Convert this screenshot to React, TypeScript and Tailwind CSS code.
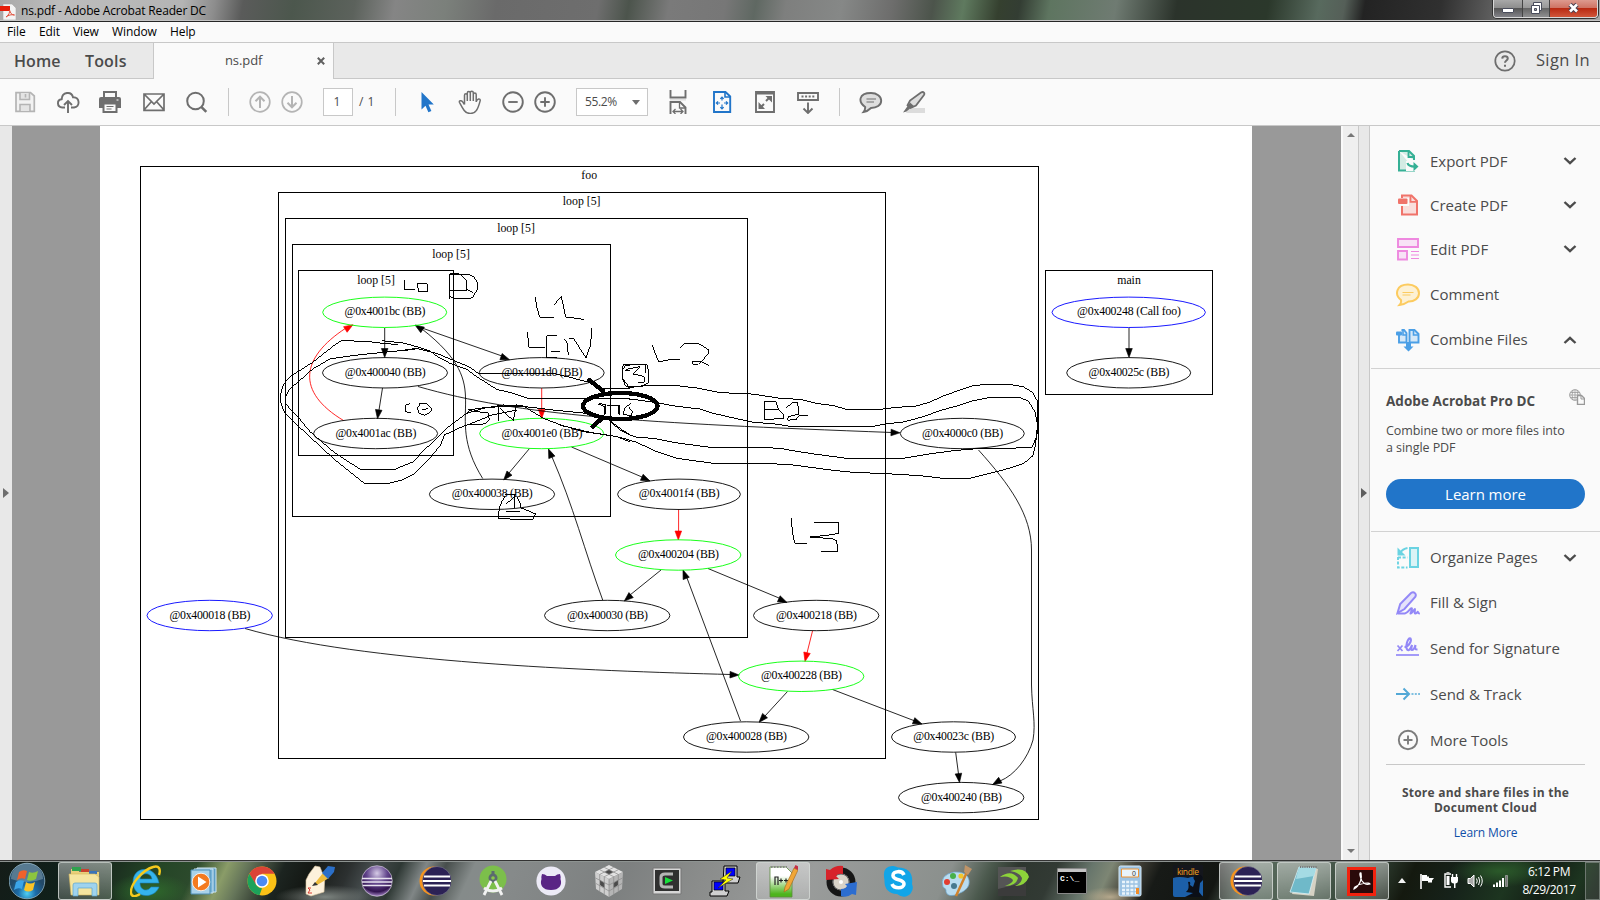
import type { ReactNode } from "react";

/* ---------- shared helpers ---------- */

function Ico({ children, size = 24, vb = 24, className = "" }: { children: ReactNode; size?: number; vb?: number; className?: string }) {
  return (
    <svg width={size} height={size} viewBox={`0 0 ${vb} ${vb}`} fill="none" className={`block shrink-0 ${className}`}>
      {children}
    </svg>
  );
}

/* ---------- title bar ---------- */

function TitleBar() {
  return (
    <header className="relative flex h-[22px] items-start justify-between overflow-hidden border-b border-[#262626] bg-[linear-gradient(100deg,#a9a9a9_0px,#bdbdbd_60px,#b4b4b4_180px,#8d8d8d_212px,#5a5b5a_240px,#4c574d_290px,#5c625c_350px,#858585_390px,#7b807b_440px,#6a6a6a_490px,#6e6e6e_590px,#4c544c_620px,#7a7a7a_660px,#777_715px,#5f6862_745px,#7e7f7e_775px,#868887_830px,#6d6d6c_880px,#4c544b_920px,#5f7a5f_950px,#35402f_985px,#333d33_1005px,#5e7560_1035px,#6f7b72_1100px,#2b332b_1160px,#2b382b_1250px,#586a5e_1300px,#555f58_1325px,#232323_1345px,#303030_1420px,#5c5c5c_1470px,#999_1500px,#aaa_1600px)]">
      <div className="absolute inset-x-0 bottom-0 h-px bg-[#c4c4c4]" />
      <div className="flex items-center">
        <svg width="17" height="20" viewBox="0 0 17 20" className="block">
          <path d="M3 3h9l4 4v12H3z" fill="#f4f4f4" stroke="#aaa" strokeWidth=".6" />
          <path d="M0 5h10v5H0z" fill="#e61e0a" />
          <path d="M6 16c3-2 4-5 3.500-7 1 3 2 5 5 5-3-.8-6 0-8.500 2z" stroke="#e0523f" fill="none" />
        </svg>
        <span className="ml-[4px] text-[12px] leading-[21px] tracking-[-0.17px] text-black">ns.pdf - Adobe Acrobat Reader DC</span>
      </div>
      <div className="mr-[2px] flex h-[18px] overflow-hidden rounded-b-[4px] border border-t-0 border-[#d8d8d8] ring-1 ring-[#333]">
        <div className="flex w-[29px] justify-center border-r border-[#444] bg-[linear-gradient(#a8a8a8_0,#8e8e8e_45%,#565656_50%,#828288_100%)] pt-[8px]">
          <div className="h-[5px] w-[12px] rounded-[1px] border border-[#4a4d5c] bg-white" />
        </div>
        <div className="flex w-[27px] justify-center border-r border-[#444] bg-[linear-gradient(#b0b0b0_0,#999_45%,#666_50%,#8e8e90_100%)] pt-[1px]">
          <svg width="13" height="14" viewBox="0 0 13 14">
            <path d="M3.500 1.500h8v8h-8z" fill="#fff" stroke="#4a4d5c" />
            <path d="M1.500 4.500h8v8h-8z" fill="#fff" stroke="#4a4d5c" />
            <path d="M4.500 7.500h2v2h-2z" fill="#aaa" stroke="#4a4d5c" />
          </svg>
        </div>
        <div className="flex w-[47px] justify-center bg-[linear-gradient(#dd9a8e_0,#cf7464_45%,#b92a12_50%,#d0563a_100%)] pt-[2px]">
          <svg width="13" height="12" viewBox="0 0 13 12">
            <path d="M3 2.500l7 7M10 2.500l-7 7" stroke="#4a4050" strokeWidth="4.600" />
            <path d="M3 2.500l7 7M10 2.500l-7 7" stroke="#fff" strokeWidth="2.600" />
          </svg>
        </div>
      </div>
    </header>
  );
}

function MenuBar() {
  return (
    <nav className="flex h-[20px] items-center bg-[#fafafa] pl-[7px] text-[12px] tracking-[-0.1px] text-black">
      <span className="w-[32px]">File</span>
      <span className="w-[34px]">Edit</span>
      <span className="w-[39px]">View</span>
      <span className="w-[58px]">Window</span>
      <span>Help</span>
    </nav>
  );
}

function TabBar() {
  return (
    <div className="flex h-[37px] border-y border-[#c8c8c8] bg-[#e9e9e9] text-[#4b4b4b]">
      <div className="flex w-[154px] items-center border-r border-[#c8c8c8] pl-[14px] text-[16px] font-semibold">
        <span className="w-[71px] tracking-[0.1px]">Home</span>
        <span className="tracking-[0.15px]">Tools</span>
      </div>
      <div className="-mb-px flex w-[180px] items-center border-r border-[#c8c8c8] bg-[#fafafa] pl-[71px]">
        <span className="w-[92px] text-[13px] tracking-[-0.1px]">ns.pdf</span>
        <svg width="8" height="8" viewBox="0 0 8 8"><path d="M.8.8l6.400 6.400M7.200.8L.8 7.200" stroke="#606060" strokeWidth="2" /></svg>
      </div>
      <div className="ml-auto flex items-center pr-[10px]">
        <Ico size={22}>
          <circle cx="12" cy="12" r="10.600" stroke="#6e6e6e" strokeWidth="1.900" />
          <path d="M9 9.400c.2-3.400 6-3.200 6 0 0 2-3 2.200-3 4.400M12 16v2.200" stroke="#6e6e6e" strokeWidth="2.200" />
        </Ico>
        <span className="ml-[20px] text-[16.500px] font-medium tracking-[0.4px]">Sign In</span>
      </div>
    </div>
  );
}

/* ---------- toolbar ---------- */

const G = "#6e6e6e";
const L = "#b4b4b4";

function Sep({ className }: { className: string }) {
  return <div className={`h-[28px] w-px shrink-0 bg-[#c8c8c8] ${className}`} />;
}

function Toolbar() {
  return (
    <div className="flex h-[47px] items-center border-b border-[#c8c8c8] bg-[#fafafa] text-[12px] text-[#4b4b4b]">
      <Ico className="ml-[13px]">
        <path d="M3 2.700h14.500L21.300 6v15.300H3z" fill="#f2f2f2" stroke={L} strokeWidth="1.700" />
        <path d="M7 3v6.500h9.500V3M12.500 4v3.500M7 21v-6.500h10V21" stroke={L} strokeWidth="1.600" fill="#e4e4e4" />
      </Ico>
      <Ico className="ml-[19px]">
        <path d="M9 17.500H6.300c-5.600-.5-5.800-7.700-.6-8.300C6 1.800 15.500.8 17 7.200c7-.5 7.500 9.800 1 10.300h-3" stroke={G} strokeWidth="1.900" />
        <path d="M12 23V11.500M8 15l4-4 4 4" stroke={G} strokeWidth="1.900" />
      </Ico>
      <Ico className="ml-[18px]">
        <path d="M6 8V2h12v6" stroke={G} strokeWidth="2" />
        <path d="M1 9a2 2 0 012-2h18a2 2 0 012 2v9H1z" fill={G} />
        <path d="M5.500 13.500h13v8.500h-13z" fill="#fafafa" stroke={G} strokeWidth="2" />
        <path d="M8.500 16.500h7M8.500 19h5" stroke={G} strokeWidth="1.200" /><path d="M18.500 10h2" stroke="#fff" />
      </Ico>
      <Ico className="ml-[20px]">
        <path d="M2 4h20v16.300H2zM2 4l10 10L22 4M2 20l7.500-8.500M22 20l-7.500-8.500" stroke={G} strokeWidth="1.700" />
      </Ico>
      <Ico className="ml-[19px]">
        <circle cx="10.500" cy="11" r="8.300" stroke={G} strokeWidth="2" /><path d="M16.300 16.800l5 5" stroke={G} strokeWidth="2.600" />
      </Ico>
      <Sep className="ml-[19px]" />
      <Ico className="ml-[19px]">
        <circle cx="12" cy="12" r="9.800" stroke={L} strokeWidth="1.700" /><path d="M12 18V7M7.500 11.300L12 6.700l4.500 4.600" stroke={L} strokeWidth="2" />
      </Ico>
      <Ico className="ml-[8px]">
        <circle cx="12" cy="12" r="9.800" stroke={L} strokeWidth="1.700" /><path d="M12 6v11M7.500 12.700l4.500 4.600 4.500-4.600" stroke={L} strokeWidth="2" />
      </Ico>
      <div className="ml-[19px] flex h-[28px] w-[30px] shrink-0 items-center justify-center border border-[#c8c8c8] bg-white pr-[2px]">1</div>
      <span className="ml-[6px] w-[17px] shrink-0 tracking-[0.5px] whitespace-nowrap">/ 1</span>
      <Sep className="ml-[19px]" />
      <Ico className="ml-[19px]">
        <path d="M6.500 2v17.500l4-3.800 2.900 6.500 3-1.300-2.900-6.400h5.300z" fill="#2175c9" />
      </Ico>
      <Ico className="ml-[19px]">
        <path d="M6.500 14.500V5.300c0-2 2.800-2 2.800 0V11M9.300 11V3c0-2 3-2 3 0v8M12.300 11V2.800c0-2 3-2 3 0V11M15.300 11V4.500c0-1.900 2.900-1.900 2.900 0V12c.6-3.600 4.400-4 4-1.400-.7 2.600-1.800 7-3.700 9.700-2.600 4-9.300 4.300-12.300.2-2-2.700-3.400-5.600-4.700-8-.8-2.200 2-2.400 3-.8l2 2.800" stroke={G} strokeWidth="1.500" />
      </Ico>
      <Ico className="ml-[19px]">
        <circle cx="12" cy="12" r="9.800" stroke={G} strokeWidth="1.900" /><path d="M7.300 12h9.400" stroke={G} strokeWidth="1.900" />
      </Ico>
      <Ico className="ml-[8px]">
        <circle cx="12" cy="12" r="9.800" stroke={G} strokeWidth="1.900" /><path d="M7.300 12h9.400M12 7.300v9.400" stroke={G} strokeWidth="1.900" />
      </Ico>
      <div className="ml-[19px] flex h-[28px] w-[72px] shrink-0 items-center justify-between border border-[#c8c8c8] bg-white pr-[7px] pl-[8px]">
        <span className="tracking-[-0.4px]">55.2%</span>
        <div className="h-0 w-0 border-x-4 border-t-[5px] border-x-transparent border-t-[#6e6e6e]" />
      </div>
      <Ico className="ml-[18px]">
        <path d="M4.500 0v7.500h15V0M4.500 24V12h9.500l5.500 5.500V24" stroke={G} strokeWidth="1.900" />
        <path d="M13.500 12v6h6M7.500 21.500h9M9.500 19l-2.500 2.500 2.500 2.500M14.500 19l2.500 2.500-2.500 2.500" stroke={G} strokeWidth="1.300" />
        <path d="M4 9.800h16" stroke="#ddd" strokeWidth="1.400" />
      </Ico>
      <Ico className="ml-[20px]">
        <path d="M4 2h11.500L20.200 6.500V22H4z" stroke="#2175c9" strokeWidth="1.900" />
        <path d="M15 2v5h5" stroke="#2175c9" strokeWidth="1.600" />
        <path d="M12 7v3.500M12 14.500V19M6.500 13H10M14 13h3.800M10.300 8.800L12 7l1.700 1.800M10.300 17.200L12 19l1.700-1.800M8 11.300L6.300 13 8 14.700M16 11.300l1.700 1.700-1.700 1.700" stroke="#2175c9" strokeWidth="1.200" />
      </Ico>
      <Ico className="ml-[19px]">
        <path d="M3 2h18v20H3z" stroke={G} strokeWidth="1.900" /><path d="M3 3.500h18" stroke={G} strokeWidth="2" />
        <path d="M12.500 6H19v6.500zM5.500 12v7H12z" fill={G} /><path d="M13 11l4-4M7 18l4-4" stroke={G} strokeWidth="2" />
      </Ico>
      <Ico className="ml-[19px]">
        <path d="M2 3h20v7H2z" stroke={G} strokeWidth="1.900" /><path d="M5.500 6.500h13" stroke={G} strokeWidth="2" strokeDasharray="2 1.600" />
        <path d="M12 12.500V23M7.500 18.500L12 23l4.500-4.500" stroke={G} strokeWidth="1.900" />
      </Ico>
      <Sep className="ml-[19px]" />
      <Ico className="ml-[19px]">
        <path d="M12 3c5.800 0 10.200 3.200 10.200 7.700S17.800 18 12 18c-1.800 1.800-4 3.400-7.500 4 1.300-1.700 1.800-3.300 1.700-5C-1 12-.6 3 12 3z" fill="#dedede" stroke={G} strokeWidth="1.900" />
        <path d="M7.500 9h9.500M7.500 12h7.500" stroke={G} strokeWidth="1.200" />
      </Ico>
      <Ico className="ml-[19px]">
        <path d="M7 18h16v5H4z" fill="#dcdcdc" />
        <path d="M19 2.500c2.600-1.500 4.200.7 2.800 2.800L14 15.500 8.500 18l-3-2.700L8 10.500z" fill="#dedede" stroke={G} strokeWidth="1.800" />
        <path d="M8 12.500l4.500 4-4.500 2L4.500 21.500 1 22.500l5-7z" fill={G} />
      </Ico>
    </div>
  );
}

/* ---------- document: control-flow graph ---------- */

type GraphNode = [string, number, number, number, string];
const NODES: GraphNode[] = [
  ["@0x4001bc (BB)", 384.7, 312.3, 62, "#0f0"],
  ["@0x400040 (BB)", 385, 372.8, 62.5, "#000"],
  ["@0x4001ac (BB)", 375.6, 433.5, 62, "#000"],
  ["@0x4001d0 (BB)", 541.7, 372.8, 62.5, "#000"],
  ["@0x4001e0 (BB)", 541.7, 433.5, 62, "#0f0"],
  ["@0x400038 (BB)", 492, 494.3, 62.6, "#000"],
  ["@0x4001f4 (BB)", 679, 494.3, 61.4, "#000"],
  ["@0x400204 (BB)", 678.2, 555, 62.7, "#0f0"],
  ["@0x4000c0 (BB)", 962.3, 433.5, 62, "#000"],
  ["@0x400030 (BB)", 607.2, 615.5, 62.7, "#000"],
  ["@0x400018 (BB)", 209.7, 615.5, 62.7, "#00f"],
  ["@0x400218 (BB)", 816.2, 615.5, 62.7, "#000"],
  ["@0x400228 (BB)", 801.2, 676.3, 62.7, "#0f0"],
  ["@0x400028 (BB)", 746.2, 737, 62.7, "#000"],
  ["@0x40023c (BB)", 953.5, 737, 62, "#000"],
  ["@0x400240 (BB)", 961.2, 797.6, 62.7, "#000"],
  ["@0x400248 (Call foo)", 1128.7, 312.3, 76.700, "#00f"],
  ["@0x40025c (BB)", 1128.7, 372.8, 62, "#000"],
];

/* [label, left, top, right, bottom, label centre, label baseline] */
const CLUSTERS: [string, number, number, number, number, number, number][] = [
  ["foo", 140.5, 166.5, 1038.5, 819.5, 589.2, 179],
  ["loop [5]", 278.5, 192.5, 885.5, 758.5, 581.700, 205],
  ["loop [5]", 285.5, 218.5, 747.5, 637.5, 516, 232],
  ["loop [5]", 292.5, 244.5, 610.5, 516.5, 451, 258],
  ["loop [5]", 298.5, 270.5, 453.5, 455.5, 376, 284],
  ["main", 1045.5, 270.5, 1212.5, 394.5, 1129, 284],
];

/* [path, tip x, tip y, heading in degrees, colour] */
const EDGES: [string, number, number, number, string][] = [
  ["M384.700 328V350", 384.7, 357.5, 90, "#000"],
  ["M382.500 388L379 410", 377.5, 418.8, 98, "#000"],
  ["M343.500 420.500C296 392 300 358 346 328", 353, 324.700, -32, "#f00"],
  ["M422 328L502 356", 509.5, 359.7, 20, "#000"],
  ["M482.700 478.500C440 410 500 390 422 329", 415, 325, 213, "#000"],
  ["M541.700 388V410", 541.7, 418.5, 90, "#f00"],
  ["M418 386.500C520 416 640 423 892 432.500", 900, 432.8, 2, "#000"],
  ["M529.500 448.500L509 473", 503.7, 480, 130, "#000"],
  ["M571.500 447L642 477", 650, 481, 24, "#000"],
  ["M602.700 600C585 552 573 505 552 457", 548.5, 449, 248, "#000"],
  ["M678.600 509.500V531", 678.3, 540, 90, "#f00"],
  ["M661 570L630 595", 624.3, 601, 139, "#000"],
  ["M708 568.500L779 598", 787, 602.500, 24, "#000"],
  ["M740.500 721L687 578", 683, 570, 249, "#000"],
  ["M812.500 631L807 653", 805, 661.5, 103, "#f00"],
  ["M245 628.500C360 662 590 671 731 674.500", 739, 675, 2, "#000"],
  ["M787.500 691.500L765 716", 759, 722.3, 132, "#000"],
  ["M832.500 689.500L915 721", 922, 724, 21, "#000"],
  ["M955.700 752.500L958.500 774", 959.500, 782.5, 83, "#000"],
  ["M978.500 450C1010 485 1031.500 515 1031.500 550V685C1032 710 1036 722 1033 740C1028 758 1015 775 1000 781", 992.5, 784.700, 150, "#000"],
  ["M1129 328V350", 1129, 357.5, 90, "#000"],
];

/* Pen annotations, in thirds of a pixel relative to each group's origin */
const INK_LEFT = [
  "M383 493L345 491L305 486L215 481L190 498L128 547L60 590Q32 615 32 650Q30 690 60 715L130 780L195 840L285 912H350L395 900L430 883L475 840L512 795L523 765L565 745L625 722L665 705L740 690",
  "M435 508L340 517L280 523L225 530L180 537L128 567L100 592L62 625Q42 645 47 672L85 712L120 755L190 815L235 845L275 870H370L430 845L460 812L490 785L530 745L590 700L640 685L700 675L760 678L820 715L880 738L960 757L1040 770L1080 786",
  "M337 482L400 489L440 500L480 513L500 528L540 550L590 568L620 590L680 628L730 640L775 655H1080",
  "M385 513L440 505L500 520L560 545L600 562L625 580H850L900 592L960 608",
  "M595 690L650 682L750 678L850 690L950 700L1020 712",
  "M403 300V330H434M442 312H472V336H446L442 312",
  "M540 281V356M540 285H573L590 303V333H540M540 281L595 283L612 290L623 310V325L610 350L596 357H560L540 350M590 328L610 338",
  "M796 350L800 380L809 412H851M853 374L874 349L887 411L942 418",
  "M772 457L777 502H824M860 466L830 468V534L860 533M842 514H869M884 477L891 490L895 526M897 476L910 475L948 533L962 495L965 445",
  "M420 671L407 675L405 692L412 697L424 698M450 672L442 685L447 700L465 706L482 695L485 685L470 671L450 670ZM455 690L475 685",
  "M592 700L596 692L655 699L658 720L650 728L635 734H600M686 681V724M690 684L730 722L740 672",
  "M705 943H737M735 945V985M708 972L735 950M708 994H750M706 948Q685 975 685 1015L737 1018H788L797 1002L760 986L753 985Q752 965 740 950",
  "M1080 556H1068L1056 570L1057 595L1066 617L1080 623M1066 572H1080M985 672L1005 680V704M1010 678H1046V702",
  "M1022 726L1050 750L1080 765",
];

const INK_RIGHT = [
  "M128 357H200L225 350L260 347H350L410 354L480 368L562 371L590 374L660 385L720 388L770 400L820 407L860 418H960L1010 412L1070 408L1110 396L1150 378L1200 360L1240 347L1280 343H1345L1390 350L1418 368L1433 395V480L1425 530L1418 558L1390 581L1330 600L1230 625H1150L1080 617L980 611L880 607L820 601L700 585L620 580H460L350 565L290 545L230 517L180 502L130 493L70 485L20 470L0 465",
  "M0 385H190L250 392L300 400L350 409L420 417L460 430L530 446L580 457L640 461L690 469H940L975 462L1030 456L1090 440L1140 422L1190 408L1240 392L1290 382H1380L1405 394L1425 425L1432 460L1430 500L1415 533L1280 536L1240 537L1180 542L1100 553L1030 565H860L770 553L710 544L660 535L600 532H450L390 524L340 517L280 505L230 502L210 495L180 475L150 452",
  "M277 225L284 245L296 276L325 270L360 268M361 233L374 221H416L444 238L446 250L432 266L415 283L400 285L397 275H425L448 287",
  "M190 285H262L266 310L264 340L240 349H205L188 325V292ZM198 298L240 290L220 312L253 320V337L235 339M256 283L258 310",
  "M613 395V448L670 446L672 435L655 418L648 395H613M613 420H655M678 413L700 397H713L716 432L685 440L683 451L710 447L716 437H743",
  "M694 744L697 785L704 820H741M762 757H836V789L818 794L750 801L815 806L830 812L833 844H783",
  "M118 400L137 405V432M145 406H179V434M213 400L195 413L190 432L213 438L217 425L205 410",
];

function GraphCanvas() {
  return (
    <svg width="1152" height="734" viewBox="100 126 1152 734" className="block" fontFamily="'Liberation Serif', serif" fontSize="11.8">
      {CLUSTERS.map(([label, x1, y1, x2, y2, lx, ly], i) => (
        <g key={i}>
          <rect x={x1} y={y1} width={x2 - x1} height={y2 - y1} fill="none" stroke="#000" />
          <text x={lx} y={ly} textAnchor="middle">{label}</text>
        </g>
      ))}
      {EDGES.map(([d, x, y, a, c], i) => (
        <g key={i}>
          <path d={d} fill="none" stroke={c} strokeWidth=".85" />
          <path d="M0 0L-9 -3.300V3.300Z" fill={c} stroke={c} strokeWidth=".6" transform={`translate(${x} ${y}) rotate(${a})`} />
        </g>
      ))}
      {NODES.map(([label, x, y, rx, c]) => (
        <g key={label}>
          <ellipse cx={x} cy={y} rx={rx} ry="15.200" fill="none" stroke={c} strokeWidth=".9" />
          <text x={x + 0.3} y={y + 3.050} textAnchor="middle" textLength={label.length > 15 ? 104 : 81}>{label}</text>
        </g>
      ))}
      <g fill="none" stroke="#000" strokeWidth="3" shapeRendering="crispEdges">
        <g transform="translate(270 180) scale(.33333)">{INK_LEFT.map((d) => <path key={d} d={d} />)}</g>
        <g transform="translate(560 270) scale(.33333)">
          {INK_RIGHT.map((d) => <path key={d} d={d} />)}
          <ellipse cx="181" cy="408" rx="112" ry="39" strokeWidth="13" />
          <path d="M88 330L130 364M98 470L126 445" strokeWidth="13" strokeLinecap="round" />
        </g>
      </g>
    </svg>
  );
}

/* ---------- tools panel ---------- */

function Chevron({ up = false }: { up?: boolean }) {
  return (
    <svg width="14" height="8" viewBox="0 0 14 8" fill="none" className="ml-auto block">
      <path d={up ? "M1.500 7L7 1.800L12.500 7" : "M1.500 1L7 6.200L12.500 1"} stroke="#4b4b4b" strokeWidth="2.400" />
    </svg>
  );
}

function Tool({ h, icon, label, chevron }: { h: string; icon: ReactNode; label: string; chevron?: "up" | "down" }) {
  return (
    <div className={`flex items-center pr-[23px] pl-[26px] ${h}`}>
      <Ico>{icon}</Ico>
      <span className="ml-[10px] text-[15px] whitespace-nowrap">{label}</span>
      {chevron && <Chevron up={chevron === "up"} />}
    </div>
  );
}

function ToolsPanel() {
  return (
    <aside className="flex w-[230px] shrink-0 flex-col bg-[#fafafa] pt-[13px] text-[#4b4b4b]">
      <Tool h="h-[44px]" label="Export PDF" chevron="down" icon={<>
        <path d="M3 2h10l5 5v4M18 20v1.500H3V2" fill="#d3ebe4" stroke="#35b095" strokeWidth="2" />
        <path d="M12.500 2v6H18" stroke="#35b095" strokeWidth="1.800" />
        <path d="M10 12h12v10H10z" fill="#fafafa" /><path d="M11.500 14c.7 3 3 3.700 8 3.600" stroke="#35b095" strokeWidth="2.200" /><path d="M17.500 13l5 4.500-5 4.800z" fill="#35b095" />
      </>} />
      <Tool h="h-[44px]" label="Create PDF" chevron="down" icon={<>
        <path d="M6 2.500h9.500L21 8v13.500H6z" fill="#f9dedc" stroke="#f0736a" strokeWidth="2" />
        <path d="M14.500 2.500v6.300H21" stroke="#f0736a" strokeWidth="1.800" />
        <rect x="1" y="5" width="12" height="8" fill="#fafafa" /><rect x="2" y="5.500" width="9.500" height="5.500" rx="1" fill="#f0736a" />
      </>} />
      <Tool h="h-[44px]" label="Edit PDF" chevron="down" icon={<>
        <path d="M2 2h20v8H2zM2 14h9v8.500H2z" fill="#f8e2f6" stroke="#ee88df" strokeWidth="1.900" />
        <path d="M15 14.500h8M15 18h8M15 21.500h8" stroke="#ee88df" strokeWidth="1.200" />
      </>} />
      <Tool h="mt-px h-[45px]" label="Comment" icon={<>
        <path d="M12 1.500c6 0 11 3.500 11 8.700s-5 8.500-10.500 8.300C10 20.300 7 21.700 3.500 22c1.400-1.500 1.900-3 1.500-5C-2 11.500.5 1.500 12 1.500z" fill="#fdf1d4" stroke="#fccb5f" strokeWidth="2" />
        <path d="M6.500 9.500h11M6.500 12h8" stroke="#fccb5f" strokeWidth="1.200" />
      </>} />
      <Tool h="h-[45px]" label="Combine Files" chevron="up" icon={<>
        <path d="M3 6v8.500h7.500V5L8 2H5.500M13.500 14.500h9V6L18.500 2h-5z" fill="#d5e8f8" stroke="#4b9fe6" strokeWidth="1.900" />
        <path d="M7 2v5h4M17.500 2v5h5" stroke="#4b9fe6" strokeWidth="1.600" /><rect x="0" y="3.500" width="6" height="4" rx="1" fill="#4b9fe6" />
        <path d="M10 14h5v4.500h2.500L12.500 23.500l-5-5H10z" fill="#4b9fe6" />
      </>} />
      <div className="mt-[6px] ml-px h-px bg-[#d2d2d2]" />
      <section className="flex flex-col pr-[15px] pl-[16px]">
        <div className="mt-[20px] flex h-[24px] items-center justify-between">
          <h2 className="pt-[1px] text-[13.500px] font-bold tracking-[0.05px]">Adobe Acrobat Pro DC</h2>
          <Ico size={16} vb={16} className="-mt-[9px]">
            <circle cx="6" cy="6" r="5.300" stroke="#999" /><path d="M1 6h10M2 3.500h8M2 8.500h6M6 1v10M4 1.500q-2 4.500 0 9M8 1.500q2 4.500 0 9" stroke="#999" strokeWidth=".8" />
            <path d="M8.500 6.500h4l3 3v6h-7z" fill="#fafafa" stroke="#999" strokeWidth="1.400" /><path d="M12 6.500V10h3.500" stroke="#999" />
          </Ico>
        </div>
        <p className="mt-[9px] text-[12.500px] leading-[17px] tracking-[-0.06px] whitespace-nowrap">Combine two or more files into<br />a single PDF</p>
        <button className="mt-[23px] h-[30px] rounded-full bg-[#2175c9] text-[15px] tracking-[-0.05px] text-white">Learn more</button>
      </section>
      <div className="mt-[22px] ml-px h-px bg-[#d2d2d2]" />
      <div className="pt-[3px]">
        <Tool h="h-[45px]" label="Organize Pages" chevron="down" icon={<>
          <path d="M14 2h8v19h-8z" fill="#daf3f6" stroke="#6ad3e2" strokeWidth="2" />
          <path d="M2 11.500h9.500M2 11v10.500h9.500" stroke="#6ad3e2" strokeWidth="1.900" strokeDasharray="3 1.600" />
          <path d="M1.500 1.500v8h8z" fill="#6ad3e2" /><path d="M4 7c2-3 4.500-4.500 7.500-5" stroke="#6ad3e2" strokeWidth="2" />
        </>} />
        <Tool h="h-[45px]" label="Fill & Sign" icon={<>
          <path d="M1.500 22l2.700-9L15 2c3-2 6 1 4.200 4L8.500 18z" fill="#e5e2fb" stroke="#9388f7" strokeWidth="2" />
          <path d="M1.500 22.500h7c3 0 7-7 7.500-5s-3 6-1 5 4-6 4-4-1 4.500.7 4 2-2.800 2.200-1.500 0 1.500 2 1.500" stroke="#9388f7" strokeWidth="1.900" />
        </>} />
        <Tool h="h-[46px]" label="Send for Signature" icon={<>
          <path d="M1.500 9.500l5 5.500M6.500 9.500l-5 5.500" stroke="#9388f7" strokeWidth="1.700" />
          <path d="M8.500 11c4 0 7.500-6 6-8.500-3-1.500-5.500 9-3 11.500 2 1.500 4-4 4.500-5-.5 3-1.300 5 0 5 2 0 3.500-5 3.500-5-.5 3-1 4.500 2 4.500" stroke="#9388f7" strokeWidth="2.100" />
          <path d="M0 19h23" stroke="#9388f7" strokeWidth="1.700" />
        </>} />
        <Tool h="h-[46px]" label="Send & Track" icon={<>
          <path d="M0 12h12M7.500 6.500l5.500 5.500-5.500 5.500" stroke="#52a8d6" strokeWidth="2" /><path d="M15.500 12H24" stroke="#7fbfe0" strokeWidth="1.900" strokeDasharray="2 1.300" />
        </>} />
        <Tool h="h-[46px]" label="More Tools" icon={<>
          <circle cx="12" cy="12" r="9.200" stroke="#7c7c7c" strokeWidth="1.900" /><path d="M7.500 12h9M12 7.500v9" stroke="#7c7c7c" strokeWidth="1.900" />
        </>} />
      </div>
      <div className="mt-px mr-[15px] ml-[16px] flex flex-col items-center border-t border-[#c8c8c8] pt-[20px] text-center text-[12px] leading-[15px]">
        <p className="font-bold tracking-[0.24px] whitespace-nowrap">Store and share files in the<br />Document Cloud</p>
        <a className="mt-[10px] tracking-[-0.1px] text-[#0f4fa8]">Learn More</a>
      </div>
    </aside>
  );
}

/* ---------- taskbar ---------- */

function Eclipse() {
  return (
    <svg width="32" height="32" viewBox="0 0 32 32">
      <circle cx="15" cy="16" r="14.500" fill="#f7941e" /><circle cx="18" cy="16" r="14.500" fill="#2c2255" stroke="#8a8a9a" strokeWidth=".5" />
      <path d="M5 11.500h26M4 16h28M5 20.500h26" stroke="#fff" strokeWidth="2.200" />
    </svg>
  );
}

const APPS: { name: string; active?: boolean; icon: ReactNode }[] = [
  { name: "explorer", active: true, icon: (
    <svg width="34" height="32" viewBox="0 0 34 32">
      <path d="M3 4h8v3h20v22H3z" fill="#e8cf7a" /><path d="M4 2h9v4H4z" fill="#2fa24f" /><path d="M13 4h8v3h-8z" fill="#c8412c" /><path d="M21 6h8v3h-8z" fill="#3b74b8" />
      <path d="M1 9h26l4 3v18H3z" fill="#f5e5a0" stroke="#d3b55c" strokeWidth=".6" /><path d="M5 31V20q0-2 2-2h20q2 0 2 2v11h-5v-8H10v8z" fill="#9fd3ee" stroke="#5ba3cc" strokeWidth=".7" />
    </svg>) },
  { name: "internet-explorer", icon: (
    <svg width="32" height="32" viewBox="0 0 32 32">
      <path d="M29 18H10c0 8 8 9 11 4h8C24 35 3 33 3 17S25-1 29 18zM10 14h12c-1-7-11-7-12 0z" fill="#35b4ec" stroke="#1781bf" strokeWidth=".6" />
      <path d="M29 10c2-6 0-10-6-8C13 5 0 19 1 28c.5 5 6 3 9 1" fill="none" stroke="#f6c91c" strokeWidth="2.400" />
    </svg>) },
  { name: "media-player", icon: (
    <svg width="30" height="30" viewBox="0 0 30 30">
      <path d="M8 2h19v24H8z" fill="#5d9dc5" stroke="#cfe6f3" /><path d="M5 3h19v24H5z" fill="#78b4d8" stroke="#cfe6f3" /><path d="M2 4h19v24H2z" fill="#a9d2ea" stroke="#4d8db5" />
      <circle cx="12" cy="16" r="8.800" fill="#f47a1f" stroke="#fff" strokeWidth=".8" /><path d="M9 10.500v11l8.500-5.500z" fill="#fff" />
    </svg>) },
  { name: "chrome", icon: (
    <svg width="30" height="30" viewBox="0 0 30 30">
      <circle cx="15" cy="15" r="14.500" fill="#fbc116" /><path d="M2.400 7.700A14.500 14.500 0 0127.600 7.700H15L8.700 18.700z" fill="#db4437" /><path d="M2.400 7.700L9 18.500Q11 22 15 22.300l-2.500 7A14.500 14.500 0 012.400 7.700z" fill="#1da25b" />
      <circle cx="15" cy="15" r="6.800" fill="#fff" /><circle cx="15" cy="15" r="5.300" fill="#4a8af4" />
    </svg>) },
  { name: "journal", icon: (
    <svg width="32" height="32" viewBox="0 0 32 32">
      <path d="M2 15l3-6 6-8 5 1 2 5 3 3-1 17-13 4-5-2z" fill="#fdf1dc" stroke="#d9c4a0" strokeWidth=".6" /><path d="M11 18l8-10 6 5-12 7z" fill="#eebc3c" /><path d="M18 8l6-7 7 1-1 5-6 7z" fill="#2b6fc8" /><path d="M8 21l3-4 3 3z" fill="#333" />
      <path d="M7 23H4l2 2-2 3h4" stroke="#d83a30" fill="none" />
    </svg>) },
  { name: "eclipse-classic", icon: (
    <svg width="32" height="32" viewBox="0 0 32 32">
      <defs><radialGradient id="orb" cx=".5" cy=".25" r=".75"><stop offset="0" stopColor="#d6cbe6" /><stop offset=".45" stopColor="#62458c" /><stop offset=".8" stopColor="#31134f" /><stop offset="1" stopColor="#a98ac9" /></radialGradient></defs>
      <circle cx="16" cy="16" r="15.300" fill="url(#orb)" stroke="#d0c8da" strokeWidth=".7" /><path d="M1 13.500h30M1 17h30M2 20.500h28" stroke="#e8e3f0" strokeWidth="1.600" />
    </svg>) },
  { name: "eclipse", icon: <Eclipse /> },
  { name: "android-studio", icon: (
    <svg width="32" height="32" viewBox="0 0 32 32">
      <circle cx="16" cy="14" r="13.500" fill="#7cbf4b" /><circle cx="16" cy="13" r="4.500" fill="#5b6b6e" /><path d="M16 6v5" stroke="#5b6b6e" strokeWidth="3" />
      <path d="M14 16L7 30M18 16l7 14M7 23q9 6 18 0" stroke="#f2f2f2" strokeWidth="2.800" fill="none" /><circle cx="16" cy="13" r="1.800" fill="#8cc84b" />
    </svg>) },
  { name: "github", icon: (
    <svg width="30" height="30" viewBox="0 0 30 30">
      <circle cx="15" cy="15" r="14.600" fill="#eceaf6" /><path d="M6 8q3 0 5 2h8q2-2 5-2 1 3 .5 5c2 6-1 11-9.500 11S3.500 19 5.500 13Q5 11 6 8z" fill="#5a2585" />
    </svg>) },
  { name: "cube", icon: (
    <svg width="32" height="34" viewBox="0 0 32 34">
      <path d="M2 8l14-7 14 7-14 7z" fill="#e2e2e2" /><path d="M2 8l14 7v18L3 25z" fill="#cfcfcf" /><path d="M30 8l-14 7v18l13-8z" fill="#b5b5b5" />
      <path d="M11.500 8L16 5.500 20.500 8 16 10.500zM7 16l4.500 3v5L7 21zM25 16l-4.500 3v5l4.500-3z" fill="#4a4a4a" />
      <path d="M6.700 5.700l14 7M11.300 3.400l14 7M25.300 5.700l-14 7M20.700 3.400l-14 7M6.700 10.400V27M11.300 12.700V30M25.300 10.400V27M20.700 12.700V30M2.500 14L16 21l13.500-7M3 19.500L16 27l13-7.500M16 15v18" stroke="#8a8a8a" strokeWidth=".7" fill="none" />
    </svg>) },
  { name: "cygwin", icon: (
    <svg width="30" height="28" viewBox="0 0 30 28">
      <path d="M1 1h28v26H1z" fill="#d6d6d6" stroke="#777" /><path d="M3 3h24v21H3z" fill="#303030" /><path d="M21 7h-8q-4 0-4 3v7q0 3 4 3h8" fill="none" stroke="#b5b5b5" strokeWidth="3" /><path d="M13 10l8 3.500-8 3.500z" fill="#18e03c" />
    </svg>) },
  { name: "putty", icon: (
    <svg width="32" height="32" viewBox="0 0 32 32">
      <path d="M15 1h13v11h3l-2 6H14zM3 16h13v10h4l-2 5H1v-4h2z" fill="#d0d0d0" stroke="#000" /><path d="M17 3h9v8h-9zM5 17h9v8H5z" fill="#00f" stroke="#000" strokeWidth=".7" /><path d="M23 6L11 14l6 1-8 8 15-9-6-1z" fill="#ff0" stroke="#222" strokeWidth=".5" />
    </svg>) },
  { name: "notepad-plus-plus", active: true, icon: (
    <svg width="30" height="33" viewBox="0 0 30 33">
      <defs><linearGradient id="npp" x2="0" y2="1"><stop offset=".3" stopColor="#fff" /><stop offset=".9" stopColor="#4db41c" /></linearGradient></defs>
      <path d="M2 2h16l6 6v24H2z" fill="url(#npp)" stroke="#5b8c3c" strokeWidth=".8" /><path d="M3 2h16" stroke="#888" strokeWidth="2" strokeDasharray="1.500 1.500" /><path d="M7 20v-8h3v8M11 15.500h4M13 13.500v4M16 15.500h4M18 13.500v4" stroke="#222" fill="none" strokeWidth="1.200" />
      <path d="M16 27l1-5L26 3l4 2-9 19z" fill="#f0a637" stroke="#a3651a" strokeWidth=".6" /><path d="M26 3l1.500-3 4 2L30 5z" fill="#c52f44" />
    </svg>) },
  { name: "sync", icon: (
    <svg width="32" height="32" viewBox="0 0 32 32">
      <circle cx="16" cy="17" r="11.500" fill="#999" stroke="#161616" strokeWidth="6" /><circle cx="16" cy="17" r="8" fill="#d9d3c8" stroke="#666" /><circle cx="16" cy="17" r="2" fill="#fff" />
      <path d="M1 4l4 1Q11 0 18 1v8q-5-1-7 2l3 3-13 1z" fill="#d7222a" /><path d="M31 30l-4-1q-5 4-11 2v-7q5 0 6-3l-2-2 12-2z" fill="#2c6dd0" />
    </svg>) },
  { name: "skype", icon: (
    <svg width="30" height="32" viewBox="0 0 30 32">
      <path d="M9 1q-9 1-8 10 0 2 .5 4Q1 28 14 29q8 6 14-1 3-4 1-9Q31 3 15 2.500 12 .5 9 1z" fill="#12a5e8" /><path d="M21 10c-2-5-11-4-11 .5 0 5.500 11 3 11 8.500 0 5-10 5-12 0" fill="none" stroke="#fff" strokeWidth="3.600" />
    </svg>) },
  { name: "paint", icon: (
    <svg width="32" height="32" viewBox="0 0 32 32">
      <path d="M14 7q13-1 15 8t-11 14q-10 4-12-2 1-3-3-5Q-1 10 14 7z" fill="#b9dcf0" stroke="#6ba5cb" strokeWidth=".7" /><circle cx="7" cy="17" r="3" fill="#e23c30" /><circle cx="13" cy="11" r="3" fill="#47b04b" /><circle cx="21" cy="11" r="2.600" fill="#f3c52c" /><circle cx="14" cy="21" r="3" fill="#47798f" />
      <path d="M16 31L27 7" stroke="#d1832c" strokeWidth="2.500" /><path d="M24 7l1-7 7 4-4 6z" fill="#bf9468" />
    </svg>) },
  { name: "nvidia", icon: (
    <svg width="34" height="32" viewBox="0 0 34 32">
      <path d="M1 2h28v29H1z" fill="#3b3b3b" /><path d="M1 2h28v15L1 24z" fill="#555" /><path d="M3 12Q14 4 21 13q-2 8-13 8 8-3 8-6-4-5-13-3zM13 6q16-5 19 6-4 9-14 9 7-3 7-8-3-6-12-7z" fill="#8dd33a" />
    </svg>) },
  { name: "command-prompt", icon: (
    <svg width="30" height="26" viewBox="0 0 30 26">
      <path d="M.5.500h29v25H.5z" fill="#000" stroke="#888" /><path d="M1 1h28v3H1z" fill="#c4c4c4" /><text x="3" y="13" fill="#fff" fontFamily="'Liberation Mono', monospace" fontSize="8" fontWeight="bold">C:\_</text>
    </svg>) },
  { name: "calculator", icon: (
    <svg width="24" height="32" viewBox="0 0 24 32">
      <rect x="1" y="1" width="22" height="30" rx="1.500" fill="#9cc3e3" stroke="#d9ecf9" /><path d="M3.500 4h17v8h-17z" fill="#e9f4fb" stroke="#ee9434" /><text x="14" y="11" fontSize="7" fill="#333" fontFamily="'Liberation Sans', sans-serif">0</text>
      <path d="M4 17h16M4 21h16M4 25h16M4 28.500h16" stroke="#e9f4fb" strokeWidth="2.600" strokeDasharray="3 1.200" /><path d="M18 23h3v6h-3z" fill="#f08c28" />
    </svg>) },
  { name: "kindle", icon: (
    <svg width="30" height="32" viewBox="0 0 30 32">
      <rect width="30" height="32" rx="2" fill="#1c5fa8" /><path d="M0 0h30v14Q22 10 15 13 6 11 0 13z" fill="#14161c" /><text x="4" y="10" fontSize="8.500" fill="#f5a122" fontFamily="'Open Sans', sans-serif" textLength="22">kindle</text>
      <path d="M15 17q3-1 2 3l3 2 2-6q-4-5 2-6 6-1 6 5l-3 3-1 9 4 5H12l8-4-7-1q4-3 2-10z" fill="#0b0f18" />
    </svg>) },
  { name: "eclipse-running", active: true, icon: <Eclipse /> },
  { name: "notepad", active: true, icon: (
    <svg width="32" height="32" viewBox="0 0 32 32">
      <path d="M12 2l18 2-4 27-22-2z" fill="#d6d2c4" /><path d="M11 2l17 1-7 26L2 27z" fill="#6fb9c9" stroke="#d8f0f5" strokeWidth=".8" /><path d="M11 2l17 1-2 8-18 3z" fill="#a5dbe4" /><path d="M12 2h17" stroke="#777" strokeWidth="2" strokeDasharray="1.200 1" />
    </svg>) },
  { name: "acrobat", active: true, icon: (
    <svg width="29" height="29" viewBox="0 0 29 29">
      <path d="M1.500 1.500h26v26h-26z" fill="#2a0a0a" stroke="#f2220e" strokeWidth="3" /><path d="M7 22c7-4 8-12 7-16-2-1-1 4 1 8 2 3 5 4 8 3 0-2-10-1-15 3-1 1-1 2-1 2z" stroke="#fff" strokeWidth="1.200" fill="none" />
    </svg>) },
];

function Taskbar() {
  return (
    <footer className="flex h-[40px] items-stretch border-t border-[#333] bg-[radial-gradient(ellipse_40px_18px_at_150px_30px,#2f6a2c_0,transparent_100%),radial-gradient(ellipse_50px_12px_at_325px_36px,#7d8480_0,transparent_100%),radial-gradient(ellipse_30px_10px_at_1110px_36px,#b5a88c_0,transparent_100%),radial-gradient(ellipse_50px_16px_at_1500px_10px,#2b5a2a_0,transparent_100%),linear-gradient(115deg,#141c18_0px,#10201a_60px,#1c3020_110px,#234425_140px,#2c4a2c_180px,#8a9c68_208px,#66765a_226px,#1c2420_260px,#141814_285px,#2c3030_320px,#454c4d_340px,#2e3834_365px,#808686_388px,#474e4c_406px,#858b8a_432px,#868a8a_470px,#7d8080_570px,#8a8c8b_640px,#9a9c9b_740px,#8b908d_865px,#4c5a4e_900px,#2e362f_925px,#323a34_960px,#68766c_992px,#7d8674_1010px,#46443a_1030px,#171a17_1055px,#131612_1110px,#58695c_1140px,#4c5e50_1200px,#2c3a2e_1255px,#14190f_1285px,#16221a_1330px,#1d3520_1375px,#142016_1410px,#1d3520_1440px,#1b201b_1470px)] shadow-[inset_0_1px_0_#8d9391]">
      <div className="flex w-[56px] shrink-0 items-center justify-center">
        <svg width="38" height="38" viewBox="0 0 38 38">
          <defs><radialGradient id="start" cy=".85"><stop offset="0" stopColor="#4fd0f4" /><stop offset=".5" stopColor="#1b6ba8" /><stop offset="1" stopColor="#234a68" /></radialGradient></defs>
          <circle cx="18" cy="19" r="17.800" fill="url(#start)" stroke="#8fb2c4" strokeWidth=".8" /><path d="M2 17a16 16 0 0132 0q-16 6-32 0z" fill="#b9d4e0" opacity=".35" />
          <path d="M10 10q4-3 8-1l-2 8q-4-2-8 1z" fill="#f0622b" /><path d="M20 10q4 2 9-1l-2 8q-5 3-9 1z" fill="#8cc63f" /><path d="M7 20q4-3 8-1l-2 8q-4-2-8 1z" fill="#3ba4e8" /><path d="M17 20q4 3 9 0l-2 8q-5 3-9 0z" fill="#fbc327" />
        </svg>
      </div>
      {APPS.map((app) => (
        <div key={app.name} className="flex w-[57.900px] shrink-0 items-center justify-center pt-px first-of-type:w-[56px] nth-2:mr-[3px]">
          <div className={app.active
            ? "flex h-[38px] w-[54px] items-center justify-center rounded-[3px] border border-[#d5dad6]/80 bg-linear-to-b from-white/45 to-white/20"
            : "flex h-[38px] w-[54px] items-center justify-center"}>
            {app.icon}
          </div>
        </div>
      ))}
      <div className="ml-auto flex items-center">
        <svg width="8" height="5" viewBox="0 0 8 5"><path d="M0 5h8L4 0z" fill="#f4f4f4" /></svg>
        <svg width="16" height="16" viewBox="0 0 16 16" className="ml-[13px]"><path d="M2 1v15" stroke="#fff" strokeWidth="1.600" /><path d="M3 2h5v1.500h2V5h5l-2 2.500v2H9V8H3z" fill="#fff" /></svg>
        <svg width="16" height="17" viewBox="0 0 16 17" className="ml-[8px]"><path d="M8 2H2v13h6M3.500 0h3" stroke="#fff" strokeWidth="1.400" fill="none" /><path d="M3.500 4h3v9h-3zM8 5h7v4q0 2-2.500 2.500V16H11v-4.500Q8 11 8 9z" fill="#fff" /><path d="M9.500 2v3M13.500 2v3" stroke="#fff" strokeWidth="1.400" /></svg>
        <svg width="16" height="16" viewBox="0 0 16 16" className="ml-[8px]" fill="none" stroke="#fff"><path d="M1 5.500h2.500L7 2v12l-3.500-3.500H1z" fill="#aaa" /><path d="M9.500 5.500q1.500 2.500 0 5M11.500 4q2.500 4 0 8M13.500 2.500q3.500 5.500 0 11" /></svg>
        <svg width="15" height="12" viewBox="0 0 15 12" className="ml-[10px]"><path d="M0 9.500h2V12H0zM3 7.500h2V12H3zM6 5.500h2V12H6zM9 3h2v9H9z" fill="#fff" /><path d="M12.500.500h2v11h-2z" fill="#777" stroke="#bbb" strokeWidth=".6" /></svg>
        <div className="ml-[14px] w-[54px] text-center text-[12px] leading-[17.500px] tracking-[-0.4px] whitespace-nowrap text-white">6:12 PM<br />8/29/2017</div>
        <div className="ml-[9px] h-[38px] w-[15px] border border-[#6d776f] bg-white/10" />
      </div>
    </footer>
  );
}

export default function App() {
  return (
    <div className="flex h-[900px] w-[1600px] flex-col overflow-hidden bg-[#fafafa] font-['Open_Sans','Noto_Sans',sans-serif]">
      <TitleBar />
      <MenuBar />
      <TabBar />
      <Toolbar />
      <main className="flex h-[734px] shrink-0">
        <div className="flex w-[12px] items-center bg-[#e8e8e8] pl-[3px]">
          <div className="h-0 w-0 border-y-[5px] border-l-[6px] border-y-transparent border-l-[#6e6e6e]" />
        </div>
        <div className="w-[88px] bg-[#999]" />
        <div className="w-[1152px] bg-white"><GraphCanvas /></div>
        <div className="w-[89px] bg-[#999]" />
        <div className="flex w-[17px] flex-col items-center justify-between border-l-2 border-[#fafafa] bg-[#efefef] py-[7px]">
          <div className="h-0 w-0 border-x-4 border-b-4 border-x-transparent border-b-[#777]" />
          <div className="h-0 w-0 border-x-4 border-t-4 border-x-transparent border-t-[#777]" />
        </div>
        <div className="flex w-[12px] items-center border-x border-[#c8c8c8] bg-[#e8e8e8] pl-[2px]">
          <div className="h-0 w-0 border-y-[5px] border-l-[6px] border-y-transparent border-l-[#5e5e5e]" />
        </div>
        <ToolsPanel />
      </main>
      <Taskbar />
    </div>
  );
}
